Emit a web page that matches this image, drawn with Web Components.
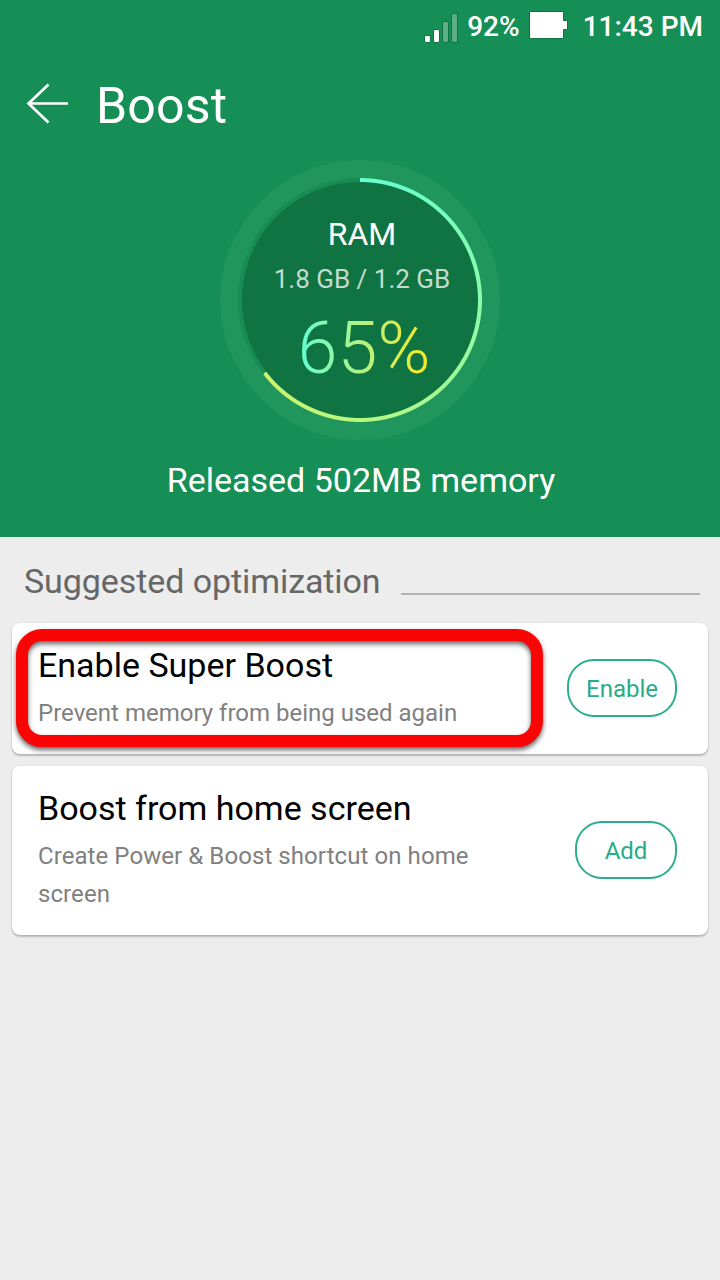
<!DOCTYPE html>
<html lang="en">
<head>
<meta charset="utf-8">
<title>Boost</title>
<style>
html, body { margin: 0; height: 100%; }
body { background: #ededed; font-family: Roboto, "Noto Sans", sans-serif; overflow: hidden; }
</style>
</head>
<body>
<boost-app></boost-app>
<script>
function define(name, html) {
  const tpl = document.createElement('template');
  tpl.innerHTML = html;
  customElements.define(name, class extends HTMLElement {
    constructor() {
      super();
      this.attachShadow({ mode: 'open' }).append(tpl.content.cloneNode(true));
    }
  });
}

define('status-bar', `
<style>
:host { display: flex; align-items: center; justify-content: flex-end; height: 53px; padding-right: 17px; color: #fff; font-size: 28px; font-weight: 500; line-height: 53px; white-space: nowrap; }
svg { display: block; flex: none; }
.signal { margin-right: 9px; }
.battery { margin: 0 15px 0 8px; }
.level { letter-spacing: 0; }
</style>
<svg class="signal" width="34" height="53" viewBox="0 0 34 53">
  <g stroke="#0c7443" stroke-width="1">
    <rect x=".5" y="35.5" width="6" height="7" rx="1.5" fill="#fff"/>
    <rect x="9.500" y="29.500" width="6" height="13" rx="1.500" fill="#fff"/>
    <rect x="18.500" y="21.500" width="6" height="21" rx="1.500" fill="#5eae84"/>
    <rect x="27.500" y="13.500" width="6" height="29" rx="1.500" fill="#5eae84"/>
  </g>
</svg>
<span class="level">92%</span>
<svg class="battery" width="40" height="53" viewBox="0 0 40 53">
  <path d="M1.500 11.500H35.500V20.500H39.500V29.500H35.500V38.500H1.500Z" fill="#fff" stroke="#0c7443"/>
</svg>
<span class="time">11:43 PM</span>`);

define('title-bar', `
<style>
:host { display: flex; align-items: center; height: 107px; padding-left: 26px; color: #fff; }
svg { display: block; flex: none; margin: -7px 27px 0 0; }
h1 { margin: 0; font-size: 50px; font-weight: 400; line-height: 107px; letter-spacing: .2px; }
</style>
<svg width="43" height="42" viewBox="0 0 43 42" fill="none" stroke="#fff" stroke-width="2.700">
  <path d="M22.500 2.500L2.500 21.500L22.500 40.500M2.500 21.500H42"/>
</svg>
<h1><slot></slot></h1>`);

define('ram-gauge', `
<style>
:host { display: grid; width: 280px; height: 280px; color: #fff; }
:host > * { grid-area: 1 / 1; }
.disc { border-radius: 50%; background: radial-gradient(circle, #0f7442 0 117.500px, #178c53 118.500px 121.500px, #20965c 122.500px); }
.arc { border-radius: 50%; background: conic-gradient(#65ffd2, #8cfcac 25%, #aef987 45%, #d0f36b 64.600%, transparent 64.600%); -webkit-mask: radial-gradient(circle, transparent 117.500px, #000 118.500px 121.500px, transparent 122.500px); mask: radial-gradient(circle, transparent 117.500px, #000 118.500px 121.500px, transparent 122.500px); }
.text { display: flex; flex-direction: column; align-items: center; padding: 54px 0 0 4px; white-space: nowrap; }
.label { font-size: 32px; line-height: 40px; }
.usage { font-size: 26px; line-height: 32px; margin-top: 9px; color: #c3dccf; }
.percent { font-size: 72px; line-height: 88px; margin: 10px 0 0 4px; font-weight: 300; color: transparent; background: linear-gradient(90deg, #5fffd5, #b5f282 50%, #fbe920); -webkit-background-clip: text; background-clip: text; }
</style>
<div class="disc"></div>
<div class="arc"></div>
<div class="text">
  <div class="label">RAM</div>
  <div class="usage">1.8 GB / 1.2 GB</div>
  <div class="percent">65%</div>
</div>`);

define('boost-hero', `
<style>
:host { display: flex; flex-direction: column; align-items: center; height: 537px; background: #158f55; color: #fff; }
status-bar, title-bar { align-self: stretch; flex: none; }
ram-gauge { flex: none; }
p { margin: 20px 0 0 2px; font-size: 34px; line-height: 41px; white-space: nowrap; }
</style>
<status-bar></status-bar>
<title-bar>Boost</title-bar>
<ram-gauge></ram-gauge>
<p>Released 502MB memory</p>`);

define('section-heading', `
<style>
:host { display: flex; align-items: center; height: 86px; padding: 0 20px 0 24px; color: #666; }
h2 { margin: 1px 0 0; font-size: 34px; font-weight: 400; line-height: 40px; letter-spacing: -.08px; white-space: nowrap; }
i { flex: none; margin: 28px 0 0 auto; width: 299px; height: 2px; background: #b0b3b0; }
</style>
<h2><slot></slot></h2><i></i>`);

define('pill-button', `
<style>
:host { display: block; flex: none; }
button { display: block; box-sizing: border-box; width: 100%; height: 58px; padding: 0; border: 2px solid #2bae8b; border-radius: 27px; background: none; color: #26ac88; font: 400 24px/56px Roboto, sans-serif; }
</style>
<button><slot></slot></button>`);

define('suggestion-card', `
<style>
:host { display: flex; align-items: center; position: relative; background: #fff; border-radius: 8px; padding: 22px 31px 22px 26px; box-shadow: 0 2px 2px rgba(0,0,0,.22), 0 0 2px rgba(0,0,0,.12); }
.text { flex: none; width: 470px; }
.title { font-size: 34px; line-height: 40px; color: #000; white-space: nowrap; }
.desc { margin-top: 9px; font-size: 24px; line-height: 38px; letter-spacing: var(--desc-spacing, 0); color: #808080; }
.action { margin: -1px 0 0 auto; }
</style>
<div class="text">
  <div class="title"><slot name="title"></slot></div>
  <div class="desc"><slot></slot></div>
</div>
<div class="action"><slot name="action"></slot></div>
<slot name="overlay"></slot>`);

define('highlight-ring', `
<style>
:host { position: absolute; left: 4px; top: 6px; box-sizing: border-box; width: 527px; height: 118px; border: 12px solid #f90505; border-radius: 26px; filter: drop-shadow(0 3px 2.500px rgba(0,0,0,.6)); }
</style>`);

define('boost-app', `
<style>
:host { display: flex; flex-direction: column; width: 720px; height: 1280px; background: #ededed; }
main { display: flex; flex-direction: column; gap: 12px; padding: 0 12px; }
.wide { width: 110px; }
.narrow { width: 102px; }
.shortcut { --desc-spacing: .075px; }
</style>
<boost-hero></boost-hero>
<section-heading>Suggested optimization</section-heading>
<main>
  <suggestion-card>
    <span slot="title">Enable Super Boost</span>Prevent memory from being used again
    <pill-button slot="action" class="wide">Enable</pill-button>
    <highlight-ring slot="overlay"></highlight-ring>
  </suggestion-card>
  <suggestion-card class="shortcut">
    <span slot="title">Boost from home screen</span>Create Power &amp; Boost shortcut on home screen
    <pill-button slot="action" class="narrow">Add</pill-button>
  </suggestion-card>
</main>`);
</script>
</body>
</html>
